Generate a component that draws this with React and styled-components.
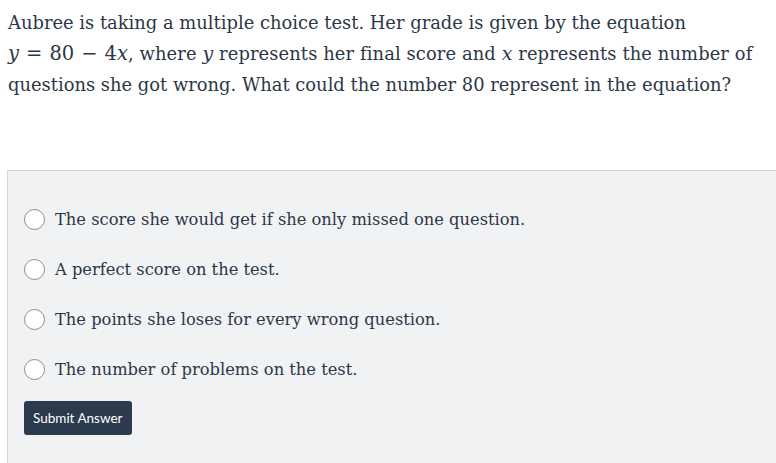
import { createGlobalStyle, styled } from "styled-components";

const Global = createGlobalStyle`
  html, body { margin: 0; padding: 0; background: #ffffff; }
  body { font-family: "DejaVu Serif", Georgia, serif; color: #2d3748; }
`;

const Page = styled.div`
  width: 776px;
  height: 463px;
  overflow: hidden;
`;

const Question = styled.p`
  margin: 0;
  padding: 7px 0 0 8px;
  font-family: "DejaVu Serif", serif;
  font-size: 17.9px;
  line-height: 31px;
  color: #2d3748;
`;

const Line = styled.span`
  letter-spacing: ${(p) => p.$spacing || 0}px;
`;

const Formula = styled.span`
  font-family: "DejaVu Serif", serif;
  font-size: 19.5px;
  letter-spacing: 0;
`;

const V = styled.i`
  font-family: "DejaVu Serif", serif;
  font-size: 19px;
`;

const Op = styled.span`
  margin: 0 7px;
  font-weight: 300;
`;

const Panel = styled.div`
  margin: 70px 0 0 7px;
  background: #f1f2f4;
  border-top: 1px solid #d6d6d6;
  border-left: 1px solid #d6d6d6;
  padding: 23px 0 40px 16px;
  height: 300px;
`;

const Option = styled.label`
  display: flex;
  align-items: center;
  gap: 10px;
  height: 50px;
  font-family: "DejaVu Serif", serif;
  font-size: 16.3px;
  color: #2d3748;
  cursor: pointer;
`;

const Radio = styled.span`
  width: 19px;
  height: 19px;
  border-radius: 50%;
  border: 1px solid #8c8c8c;
  background: #ffffff;
  flex-shrink: 0;
`;

const Button = styled.button`
  margin-top: 7px;
  height: 34px;
  padding: 0 9px;
  border: none;
  border-radius: 3px;
  background: #2b3a4d;
  color: #ffffff;
  font-family: Lato, "Open Sans", sans-serif;
  font-size: 13.5px;
  cursor: pointer;
`;

const options = [
  "The score she would get if she only missed one question.",
  "A perfect score on the test.",
  "The points she loses for every wrong question.",
  "The number of problems on the test.",
];

export default function App() {
  return (
    <Page>
      <Global />
      <Question>
        Aubree is taking a multiple choice test. Her grade is given by the equation
        <br />
        <Line $spacing={0.1}>
          <Formula>
            <i>y</i>
            <Op>=</Op>80<Op>−</Op>4<i>x</i>
          </Formula>
          , where <V>y</V> represents her final score and <V>x</V> represents the
          number of
        </Line>
        <br />
        questions she got wrong. What could the number 80 represent in the
        equation?
      </Question>
      <Panel>
        {options.map((o) => (
          <Option key={o}>
            <Radio />
            {o}
          </Option>
        ))}
        <Button>Submit Answer</Button>
      </Panel>
    </Page>
  );
}
